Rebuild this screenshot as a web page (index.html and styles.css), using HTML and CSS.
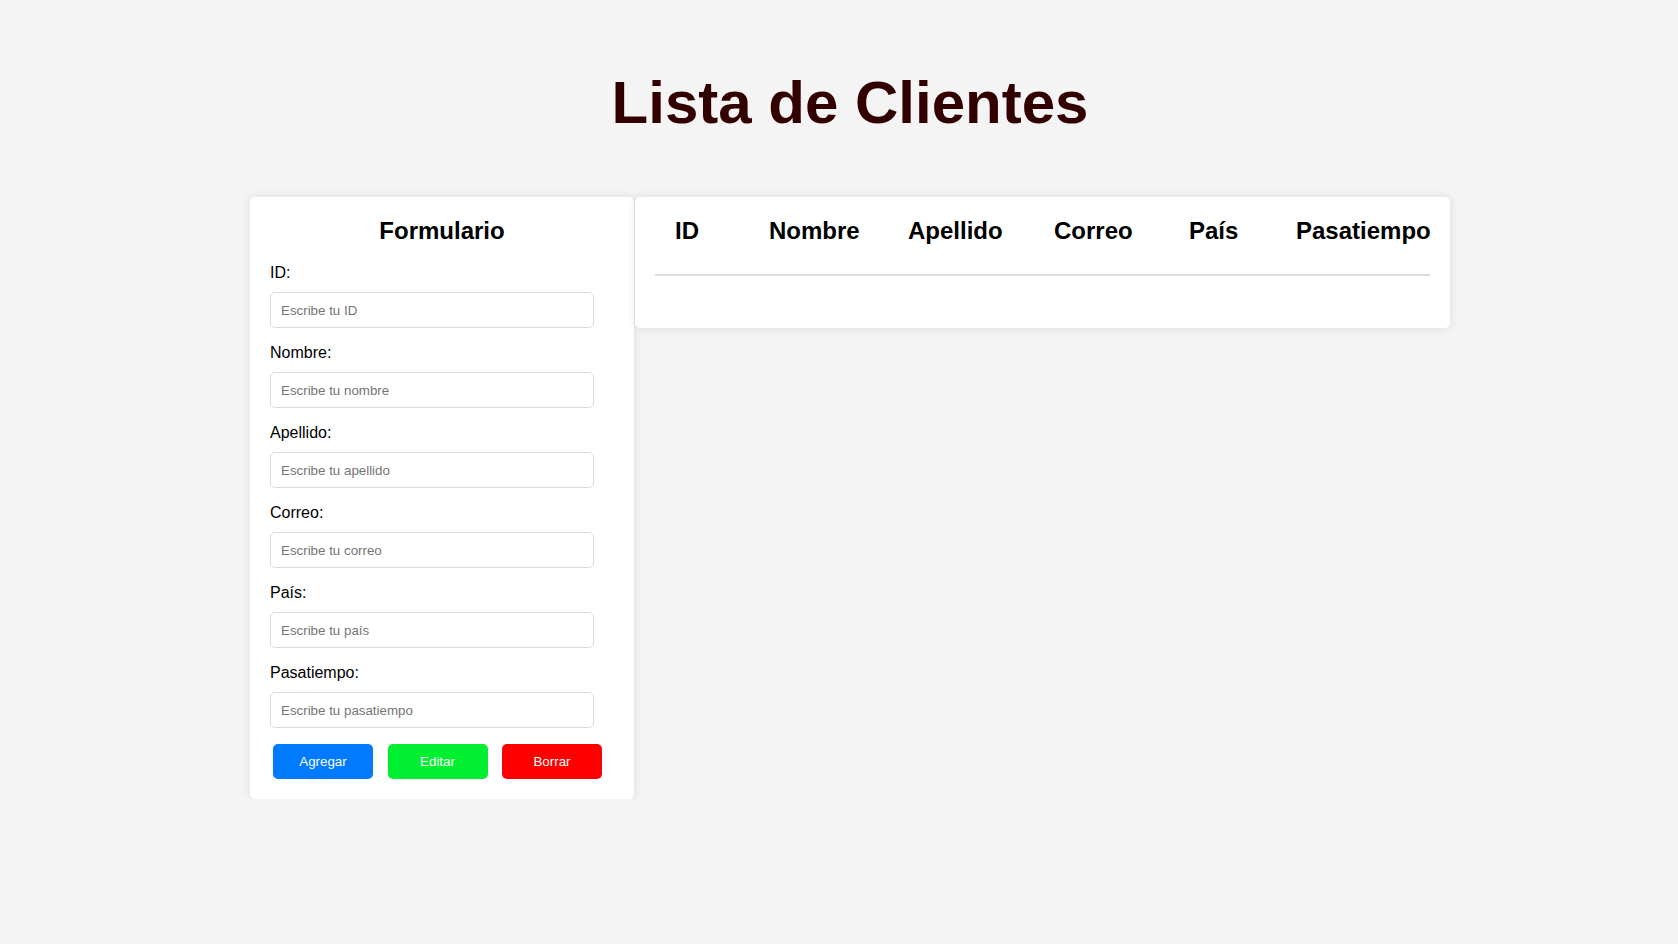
FILE: index.html
```html
<!DOCTYPE html>
<html lang="es">
<head>
<meta charset="utf-8">
<title>Lista de Clientes</title>
<link rel="stylesheet" href="styles.css">
</head>
<body>
  <h1 class="title">Lista de Clientes</h1>
  <div class="layout">
    <form class="card form-card">
      <h2 class="form-title">Formulario</h2>
      <label class="field-label" for="id">ID:</label>
      <input class="field-input" id="id" type="text" placeholder="Escribe tu ID">
      <label class="field-label" for="nombre">Nombre:</label>
      <input class="field-input" id="nombre" type="text" placeholder="Escribe tu nombre">
      <label class="field-label" for="apellido">Apellido:</label>
      <input class="field-input" id="apellido" type="text" placeholder="Escribe tu apellido">
      <label class="field-label" for="correo">Correo:</label>
      <input class="field-input" id="correo" type="text" placeholder="Escribe tu correo">
      <label class="field-label" for="pais">País:</label>
      <input class="field-input" id="pais" type="text" placeholder="Escribe tu país">
      <label class="field-label" for="pasatiempo">Pasatiempo:</label>
      <input class="field-input" id="pasatiempo" type="text" placeholder="Escribe tu pasatiempo">
      <div class="actions">
        <button type="button" class="btn btn-add">Agregar</button>
        <button type="button" class="btn btn-edit">Editar</button>
        <button type="button" class="btn btn-delete">Borrar</button>
      </div>
    </form>
    <div class="card table-card">
      <table class="clients">
        <thead>
          <tr>
            <th class="col-id">ID</th>
            <th class="col-nombre">Nombre</th>
            <th class="col-apellido">Apellido</th>
            <th class="col-correo">Correo</th>
            <th class="col-pais">País</th>
            <th class="col-pasatiempo">Pasatiempo</th>
          </tr>
        </thead>
        <tbody></tbody>
      </table>
    </div>
  </div>
</body>
</html>
```

FILE: styles.css
```css
html, body {
  background: #f4f4f4;
}

body {
  margin: 0;
  padding: 68px 8px 0 30px;
  font-family: "Liberation Sans", Arial, sans-serif;
  color: #000;
}

.title {
  margin: 0 0 60px;
  text-align: center;
  font-size: 60px;
  font-weight: bold;
  color: #330000;
  line-height: normal;
}

.layout {
  width: 1200px;
  margin: 0 auto;
  display: flex;
  align-items: flex-start;
  gap: 1px;
}

.card {
  background: #fff;
  border-radius: 5px;
  box-shadow: 0 0 10px rgba(0, 0, 0, 0.1);
  box-sizing: border-box;
}

.form-card {
  width: 384px;
  flex: 0 0 384px;
  padding: 20px;
  margin: 0;
}

.form-title {
  margin: 0 0 19px;
  text-align: center;
  font-size: 24px;
  font-weight: bold;
  line-height: normal;
}

.field-label {
  display: block;
  font-size: 16px;
  line-height: normal;
  margin-bottom: 10px;
}

.field-input {
  display: block;
  box-sizing: border-box;
  width: 324px;
  height: 36px;
  margin: 0 0 16px;
  padding: 0 10px;
  border: 1px solid #dcdcdc;
  border-radius: 5px;
  font-family: "Liberation Sans", Arial, sans-serif;
  font-size: 13.333px;
  color: #000;
  background: #fff;
  outline: none;
}

.field-input::placeholder {
  color: #757575;
}

.actions {
  display: flex;
  gap: 14.5px;
  padding-left: 3px;
}

.btn {
  width: 100px;
  height: 35px;
  border: none;
  border-radius: 5px;
  color: #fff;
  font-family: "Liberation Sans", Arial, sans-serif;
  font-size: 13.333px;
  padding: 0;
  cursor: pointer;
}

.btn-add {
  background: #007bff;
}

.btn-edit {
  background: #00f031;
}

.btn-delete {
  background: #ff0000;
}

.table-card {
  flex: 1 1 auto;
  padding: 20px 20px 52px;
}

.clients {
  width: 100%;
  border-collapse: collapse;
  table-layout: fixed;
}

.clients th {
  box-sizing: border-box;
  padding: 0 0 28.5px;
  text-align: left;
  font-size: 24px;
  font-weight: bold;
  line-height: normal;
  white-space: nowrap;
  border-bottom: 2px solid #dddddd;
}

.clients .col-id {
  width: 114px;
  padding-left: 20px;
}

.clients .col-nombre {
  width: 139px;
}

.clients .col-apellido {
  width: 146px;
}

.clients .col-correo {
  width: 135px;
}

.clients .col-pais {
  width: 107px;
}

.clients .col-pasatiempo {
  width: 134px;
}
```
